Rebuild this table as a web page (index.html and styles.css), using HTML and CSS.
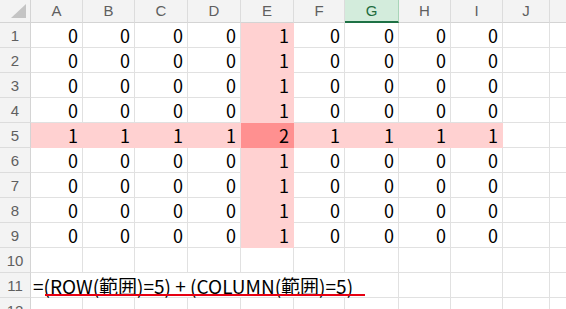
FILE: index.html
```html
<!DOCTYPE html>
<html lang="ja">
<head>
<meta charset="utf-8">
<link rel="stylesheet" href="styles.css">
</head>
<body>
<div class="sheet">
  <div class="corner"><span class="tri"></span></div>
  <div class="ch">A</div><div class="ch">B</div><div class="ch">C</div><div class="ch">D</div><div class="ch">E</div><div class="ch">F</div><div class="ch sel">G</div><div class="ch">H</div><div class="ch">I</div><div class="ch">J</div><div class="ch"></div>

  <div class="rh">1</div><div class="c">0</div><div class="c">0</div><div class="c">0</div><div class="c">0</div><div class="c p">1</div><div class="c">0</div><div class="c">0</div><div class="c">0</div><div class="c">0</div><div class="c"></div><div class="c"></div>
  <div class="rh">2</div><div class="c">0</div><div class="c">0</div><div class="c">0</div><div class="c">0</div><div class="c p">1</div><div class="c">0</div><div class="c">0</div><div class="c">0</div><div class="c">0</div><div class="c"></div><div class="c"></div>
  <div class="rh">3</div><div class="c">0</div><div class="c">0</div><div class="c">0</div><div class="c">0</div><div class="c p">1</div><div class="c">0</div><div class="c">0</div><div class="c">0</div><div class="c">0</div><div class="c"></div><div class="c"></div>
  <div class="rh">4</div><div class="c">0</div><div class="c">0</div><div class="c">0</div><div class="c">0</div><div class="c p">1</div><div class="c">0</div><div class="c">0</div><div class="c">0</div><div class="c">0</div><div class="c"></div><div class="c"></div>
  <div class="rh">5</div><div class="c p">1</div><div class="c p">1</div><div class="c p">1</div><div class="c p">1</div><div class="c pp">2</div><div class="c p">1</div><div class="c p">1</div><div class="c p">1</div><div class="c p">1</div><div class="c"></div><div class="c"></div>
  <div class="rh">6</div><div class="c">0</div><div class="c">0</div><div class="c">0</div><div class="c">0</div><div class="c p">1</div><div class="c">0</div><div class="c">0</div><div class="c">0</div><div class="c">0</div><div class="c"></div><div class="c"></div>
  <div class="rh">7</div><div class="c">0</div><div class="c">0</div><div class="c">0</div><div class="c">0</div><div class="c p">1</div><div class="c">0</div><div class="c">0</div><div class="c">0</div><div class="c">0</div><div class="c"></div><div class="c"></div>
  <div class="rh">8</div><div class="c">0</div><div class="c">0</div><div class="c">0</div><div class="c">0</div><div class="c p">1</div><div class="c">0</div><div class="c">0</div><div class="c">0</div><div class="c">0</div><div class="c"></div><div class="c"></div>
  <div class="rh">9</div><div class="c">0</div><div class="c">0</div><div class="c">0</div><div class="c">0</div><div class="c p">1</div><div class="c">0</div><div class="c">0</div><div class="c">0</div><div class="c">0</div><div class="c"></div><div class="c"></div>
  <div class="rh">10</div><div class="c"></div><div class="c"></div><div class="c"></div><div class="c"></div><div class="c"></div><div class="c"></div><div class="c"></div><div class="c"></div><div class="c"></div><div class="c"></div><div class="c"></div>
  <div class="rh">11</div><div class="c formula"><span class="ftext">=(ROW(範囲)=5) + (COLUMN(範囲)=5)</span></div><div class="c"></div><div class="c"></div><div class="c"></div><div class="c"></div>
  <div class="rh">12</div><div class="c"></div><div class="c"></div><div class="c"></div><div class="c"></div><div class="c"></div><div class="c"></div><div class="c"></div><div class="c"></div><div class="c"></div><div class="c"></div><div class="c"></div>
</div>
</body>
</html>
```
FILE: styles.css
```css
* { box-sizing: border-box; }
html, body { margin: 0; padding: 0; background: #fff; overflow: hidden; }
.sheet {
  display: grid;
  grid-template-columns: 31px 52px 52px 53px 53px 53px 51px 54px 52px 52px 47px 40px;
  grid-template-rows: 23px repeat(12, 25px);
  font-family: "Noto Sans CJK JP", "Noto Sans", sans-serif;
}
.corner {
  position: relative;
  background: #f3f3f3;
  border-right: 1px solid #d4d4d4;
  border-bottom: 1px solid #d4d4d4;
}
.tri {
  position: absolute;
  right: 4px;
  bottom: 4px;
  width: 0;
  height: 0;
  border-left: 15px solid transparent;
  border-bottom: 14px solid #c4c4c4;
}
.ch {
  background: #f3f3f3;
  border-right: 1px solid #dcdcdc;
  border-bottom: 1px solid #d4d4d4;
  color: #5f5f5f;
  font-family: "Liberation Sans", "Noto Sans", sans-serif;
  font-size: 15px;
  display: flex;
  align-items: center;
  justify-content: center;
  padding-bottom: 1px;
}
.ch.sel {
  background: #d3ecdc;
  color: #1e6b3c;
  border-right-color: #a8d5b8;
  border-bottom: 2px solid #1e7145;
  padding-bottom: 0;
}
.rh {
  background: #f3f3f3;
  border-right: 1px solid #d4d4d4;
  border-bottom: 1px solid #dcdcdc;
  color: #5f5f5f;
  font-family: "Liberation Sans", "Noto Sans", sans-serif;
  font-size: 15px;
  display: flex;
  align-items: center;
  justify-content: center;
}
.c {
  border-right: 1px solid #e1e1e1;
  border-bottom: 1px solid #e1e1e1;
  color: #000;
  font-size: 18px;
  display: flex;
  align-items: center;
  justify-content: flex-end;
  padding-right: 4px;
  line-height: 1;
}
.c.p { background: #ffd1d1; border-color: #ffd1d1; }
.c.pp { background: #ff9090; border-color: #ff9090; }
.formula {
  grid-column: 2 / 9;
  justify-content: flex-start;
  padding-left: 2px;
  position: relative;
  font-size: 19px;
}
.ftext { white-space: nowrap; }
.formula::after {
  content: "";
  position: absolute;
  left: 14px;
  width: 320px;
  bottom: 1px;
  height: 2px;
  background: #e60012;
}
```
